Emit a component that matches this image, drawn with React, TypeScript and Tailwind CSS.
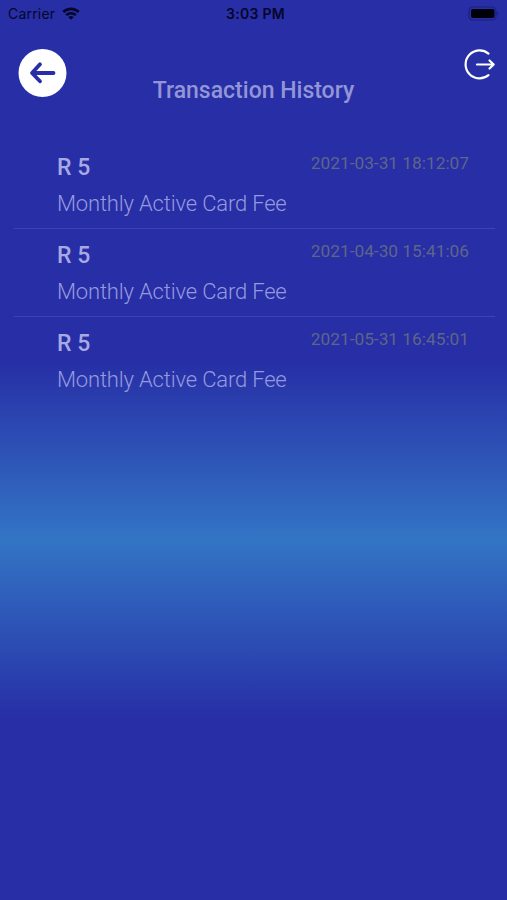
const transactions = [
  { amount: "R 5", date: "2021-03-31 18:12:07", description: "Monthly Active Card Fee" },
  { amount: "R 5", date: "2021-04-30 15:41:06", description: "Monthly Active Card Fee" },
  { amount: "R 5", date: "2021-05-31 16:45:01", description: "Monthly Active Card Fee" },
]

const StatusBar = () => {
  return (
    <div className="grid h-7 grid-cols-3 items-center px-2 font-['Inter',sans-serif] text-[#05062a]">
      <div className="flex items-center gap-[7px]">
        <span className="text-[14px] leading-7 tracking-[0.2px]">Carrier</span>
        <svg className="-mt-0.5" width="18" height="13" viewBox="0 0 18 13" fill="none" stroke="currentColor" strokeWidth="2.6">
          <path d="M1.300 5a11 11 0 0 1 15.400 0" />
          <path d="M4.200 8.200a6.800 6.800 0 0 1 9.600 0" />
          <path d="M9 12.800 6.400 10.200a3.700 3.700 0 0 1 5.200 0z" fill="currentColor" stroke="none" />
        </svg>
      </div>
      <span className="pl-1 text-center text-[14px] font-semibold leading-7 tracking-[0.3px]">3:03 PM</span>
      <svg className="-mt-0.5 justify-self-end" width="32" height="15" viewBox="0 0 32 15">
        <rect x="2" y="1" width="27" height="13" rx="4" fill="none" stroke="#1b2080" strokeWidth="1.2" />
        <rect x="4" y="3" width="23.500" height="9" rx="2" fill="#000008" />
        <path d="M30.200 5.500v4c1.500-.7 1.500-3.300 0-4z" fill="#1b2080" />
      </svg>
    </div>
  )
}

const Header = () => {
  return (
    <header className="grid h-[113px] grid-cols-[1fr_auto_1fr] items-start px-3 pt-5">
      <button className="ml-1.5 size-[49px]" aria-label="Back">
        <svg width="49" height="49" viewBox="0 0 49 49" fill="none">
          <circle cx="24.500" cy="25" r="24" fill="#fff" />
          <path
            d="M35.500 25H14.500M22 16.300 14 25l8 8.300"
            stroke="#272ea6"
            strokeWidth="3.8"
            strokeLinecap="round"
            strokeLinejoin="round"
          />
        </svg>
      </button>
      <h1 className="pt-[27px] text-[23px] font-medium leading-8 text-[#9296d6]">Transaction History</h1>
      <button className="-mr-px justify-self-end" aria-label="Log out">
        <svg width="32" height="32" viewBox="0 0 32 32" fill="none" stroke="#fff" strokeWidth="2.2" strokeLinecap="round" strokeLinejoin="round">
          <path d="M24.500 5.600a14 14 0 1 0 0 21.600" />
          <path d="M13 16.500h16.500M25.500 12.500l4.200 4-4.200 4" />
        </svg>
      </button>
    </header>
  )
}

export default function App() {
  return (
    <div className="h-screen w-full overflow-hidden bg-[linear-gradient(180deg,#272ea6_40%,#3375c5_60%,#272ea6_80%)] font-['Roboto',sans-serif]">
      <StatusBar />
      <Header />
      <ul className="pl-3.5 pr-3">
        {transactions.map((item) => (
          <li key={item.date} className="h-[88.200px] border-b border-[#3b43b5] pl-[43px] pr-[26px] pt-2.5 last:border-b-0">
            <div className="flex items-start justify-between">
              <span className="pt-px text-[23px] font-medium leading-8 text-[#a6a9e3]">{item.amount}</span>
              <span className="text-[17.300px] leading-6 text-[#5f6588]">{item.date}</span>
            </div>
            <p className="pt-1 text-[22px] font-light leading-8 tracking-[-0.170px] text-[#959ade]">{item.description}</p>
          </li>
        ))}
      </ul>
    </div>
  )
}
